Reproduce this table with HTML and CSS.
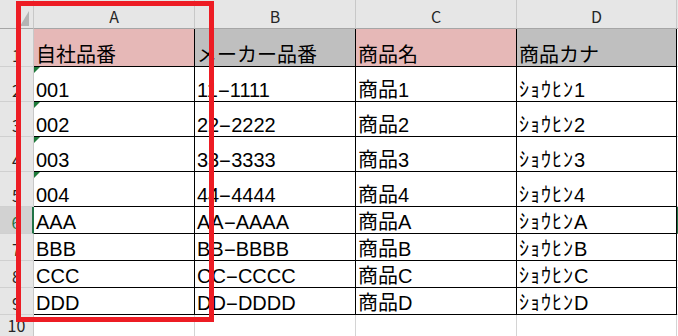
FILE: index.html
```html
<!DOCTYPE html>
<html lang="ja">
<head>
    <meta charset="UTF-8">
    <meta name="viewport" content="width=device-width, initial-scale=1.0">
    <title>商品マスタ</title>
    <link rel="stylesheet" href="styles.css">
</head>
<body>
    <div class="sheet">
        <!-- cabecera de columnas -->
        <div class="corner"><span class="select-all"></span></div>
        <div class="col-head">A</div>
        <div class="col-head">B</div>
        <div class="col-head">C</div>
        <div class="col-head">D</div>
        <div class="col-head col-e"></div>

        <div class="row-head">1</div>
        <div class="cell pink">自社品番</div>
        <div class="cell gray">メーカー品番</div>
        <div class="cell pink">商品名</div>
        <div class="cell gray">商品カナ</div>
        <div class="cell col-e"></div>

        <div class="row-head">2</div>
        <div class="cell as-text">001</div>
        <div class="cell">11<span class="dash">-</span>1111</div>
        <div class="cell">商品1</div>
        <div class="cell kana">ｼｮｳﾋﾝ1</div>
        <div class="cell col-e"></div>

        <div class="row-head">3</div>
        <div class="cell as-text">002</div>
        <div class="cell">22<span class="dash">-</span>2222</div>
        <div class="cell">商品2</div>
        <div class="cell kana">ｼｮｳﾋﾝ2</div>
        <div class="cell col-e"></div>

        <div class="row-head">4</div>
        <div class="cell as-text">003</div>
        <div class="cell">33<span class="dash">-</span>3333</div>
        <div class="cell">商品3</div>
        <div class="cell kana">ｼｮｳﾋﾝ3</div>
        <div class="cell col-e"></div>

        <div class="row-head">5</div>
        <div class="cell as-text">004</div>
        <div class="cell">44<span class="dash">-</span>4444</div>
        <div class="cell">商品4</div>
        <div class="cell kana">ｼｮｳﾋﾝ4</div>
        <div class="cell col-e"></div>

        <div class="row-head active">6</div>
        <div class="cell">AAA</div>
        <div class="cell">AA<span class="dash">-</span>AAAA</div>
        <div class="cell">商品A</div>
        <div class="cell kana">ｼｮｳﾋﾝA</div>
        <div class="cell col-e selected"></div>

        <div class="row-head">7</div>
        <div class="cell">BBB</div>
        <div class="cell">BB<span class="dash">-</span>BBBB</div>
        <div class="cell">商品B</div>
        <div class="cell kana">ｼｮｳﾋﾝB</div>
        <div class="cell col-e"></div>

        <div class="row-head">8</div>
        <div class="cell">CCC</div>
        <div class="cell">CC<span class="dash">-</span>CCCC</div>
        <div class="cell">商品C</div>
        <div class="cell kana">ｼｮｳﾋﾝC</div>
        <div class="cell col-e"></div>

        <div class="row-head">9</div>
        <div class="cell">DDD</div>
        <div class="cell">DD<span class="dash">-</span>DDDD</div>
        <div class="cell">商品D</div>
        <div class="cell kana">ｼｮｳﾋﾝD</div>
        <div class="cell col-e"></div>

        <div class="row-head">10</div>
        <div class="cell empty"></div>
        <div class="cell empty"></div>
        <div class="cell empty"></div>
        <div class="cell empty"></div>
        <div class="cell empty col-e"></div>

        <!-- marco rojo sobre la columna A -->
        <div class="marker"></div>
    </div>
</body>
</html>
```

FILE: styles.css
```css
html, body{
    margin: 0;
    height: 100%;
    overflow: hidden;
    background-color: #ffffff;
}
.sheet{
    position: relative;
    display: grid;
    grid-template-columns: 34px 161px 161px 161px 160px 1fr;
    grid-template-rows: 29px 38px 35px 35px 35px 35px 27px 27px 27px 27px 22px;
    width: 678px;
    font-family: "Liberation Sans", "Noto Sans CJK JP", sans-serif;
}
.sheet > div{
    box-sizing: border-box;
}
.corner{
    position: relative;
    background-color: #e6e6e6;
    border-right: 1px solid #c8c8c8;
    border-bottom: 1px solid #a6a6a6;
}
.select-all{
    position: absolute;
    right: 4px;
    bottom: 2px;
    width: 0;
    height: 0;
    border-left: 9px solid transparent;
    border-bottom: 15px solid #b4b4b4;
}
.col-head{
    display: flex;
    justify-content: center;
    align-items: flex-end;
    padding-bottom: 2px;
    background-color: #e6e6e6;
    border-right: 1px solid #c8c8c8;
    border-bottom: 1px solid #a6a6a6;
    font-family: "Noto Sans CJK JP", sans-serif;
    font-size: 16px;
    line-height: 20px;
    color: #262626;
}
.row-head{
    display: flex;
    justify-content: center;
    align-items: flex-end;
    padding-bottom: 1px;
    background-color: #e6e6e6;
    border-right: 1px solid #c8c8c8;
    border-bottom: 1px solid #d0d0d0;
    font-family: "Noto Sans CJK JP", sans-serif;
    font-size: 16px;
    line-height: 20px;
    color: #262626;
}
.row-head.active{
    background-color: #d2d2d2;
    color: #217346;
    border-right: 2px solid #217346;
}
.cell{
    position: relative;
    display: flex;
    align-items: flex-end;
    padding: 0 2px 1px 2px;
    border-right: 1px solid #000000;
    border-bottom: 1px solid #000000;
    font-size: 20px;
    line-height: 20px;
    color: #000000;
    white-space: nowrap;
    overflow: hidden;
}
.pink{
    background-color: #e6b8b7;
}
.gray{
    background-color: #bfbfbf;
}
/* guion mas largo entre los dos bloques del codigo */
.dash{
    display: inline-block;
    width: 12px;
    text-align: center;
    transform: scaleX(2);
}
/* katakana de medio ancho, algo mas abierta */
.kana{
    letter-spacing: 1px;
}
/* numero guardado como texto: triangulo verde */
.as-text::before{
    content: "";
    position: absolute;
    left: 0;
    top: 0;
    width: 0;
    height: 0;
    border-top: 6px solid #1e7a3a;
    border-right: 6px solid transparent;
}
.cell.empty{
    border-right: 1px solid #d4d4d4;
    border-bottom: none;
}
.col-e{
    border-right: none;
}
.cell.col-e{
    border-bottom: 1px solid #d4d4d4;
}
.cell.empty.col-e{
    border-bottom: none;
}
.cell.selected{
    border-left: 2px solid #217346;
}
.marker{
    position: absolute;
    left: 16px;
    top: 1px;
    width: 198px;
    height: 321px;
    box-sizing: border-box;
    border: 5px solid #ed1c24;
    pointer-events: none;
}
```
